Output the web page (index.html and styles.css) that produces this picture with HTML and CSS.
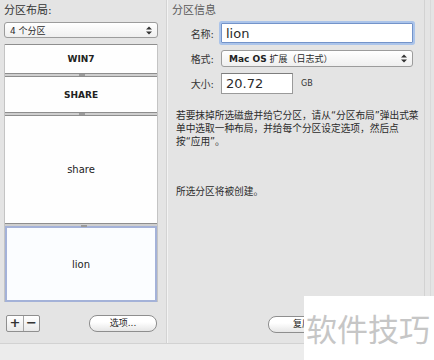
FILE: index.html
```html
<!DOCTYPE html>
<html lang="zh-CN">
  <head>
    <meta charset="UTF-8" />
    <meta name="viewport" content="width=device-width, initial-scale=1.0" />
    <title>分区</title>
    <link rel="stylesheet" href="styles.css">
  </head>
  <body>
    <div class="window">
      <div class="layout-pane">
        <div class="pane-title">分区布局:</div>
        <div class="popup layout-popup">
          <span>4 个分区</span>
          <svg class="arrows" width="6" height="9" viewBox="0 0 6 9"><path d="M0 3.5 L3 0.5 L6 3.5 Z M0 5.5 L3 8.5 L6 5.5 Z" fill="#333"/></svg>
        </div>
        <div class="map">
          <div class="part part-win7 caps">WIN7</div>
          <div class="part part-share caps">SHARE</div>
          <div class="part part-data">share</div>
          <div class="part part-lion selected">lion</div>
        </div>
        <div class="button-row">
          <div class="segmented">
            <span class="seg">+</span>
            <span class="seg">−</span>
          </div>
          <span class="push">选项...</span>
        </div>
      </div>

      <div class="info-pane">
        <div class="pane-title dim">分区信息</div>
        <div class="form-row row-name">
          <span class="field-label">名称:</span>
          <div class="text-field focused">lion</div>
        </div>
        <div class="form-row row-format">
          <span class="field-label">格式:</span>
          <div class="popup format-popup">
            <span><span class="mac">Mac OS</span> 扩展（日志式）</span>
            <svg class="arrows" width="6" height="9" viewBox="0 0 6 9"><path d="M0 3.5 L3 0.5 L6 3.5 Z M0 5.5 L3 8.5 L6 5.5 Z" fill="#333"/></svg>
          </div>
        </div>
        <div class="form-row row-size">
          <span class="field-label">大小:</span>
          <div class="text-field size-field">20.72</div>
          <span class="unit">GB</span>
        </div>
        <p class="note">若要抹掉所选磁盘并给它分区，请从“分区布局”弹出式菜<br>单中选取一种布局，并给每个分区设定选项，然后点<br>按“应用”。</p>
        <p class="note status">所选分区将被创建。</p>
        <div class="info-buttons">
          <span class="push">复原</span>
        </div>
      </div>
      <div class="edge"></div>
    </div>
    <div class="footer-strip"></div>

    <div class="watermark">软件技巧</div>
  </body>
</html>
```

FILE: styles.css
```css
* {
  box-sizing: border-box;
  margin: 0;
}
body {
  background: #e4e4e4;
  font-family: "DejaVu Sans", "Noto Sans CJK SC", sans-serif;
  color: #2b2b2b;
  width: 434px;
  height: 360px;
  overflow: hidden;
  position: relative;
}
.window {
  display: flex;
  height: 343px;
}
.footer-strip {
  height: 17px;
  background: #ececec;
  border-top: 1px solid #d2d2d2;
}

/* left side */
.layout-pane {
  width: 167px;
  padding: 4px 0 0 4px;
  border-right: 1px solid #d3d3d3;
  box-shadow: 1px 0 0 #f3f3f3;
  display: flex;
  flex-direction: column;
}
.pane-title {
  font-size: 11px;
  line-height: 14px;
  height: 14px;
  color: #333;
}
.pane-title.dim {
  color: #5a5a5a;
}
.popup {
  display: flex;
  align-items: center;
  justify-content: space-between;
  height: 16px;
  border: 1px solid #9c9c9c;
  border-radius: 3px;
  background: linear-gradient(#ffffff, #efefef);
  font-size: 9px;
  padding: 0 5px 0 5px;
  white-space: nowrap;
}
.layout-popup {
  width: 154px;
  margin-top: 4px;
}
.arrows {
  flex: none;
}
.map {
  width: 154px;
  margin-top: 6px;
  border-left: 1px solid #c4c4c4;
  border-right: 1px solid #c4c4c4;
  background: #cfcfcf;
  display: flex;
  flex-direction: column;
  gap: 2px;
}
.part {
  position: relative;
  background: #fefefe;
  border-top: 1px solid #8e8e8e;
  border-bottom: 1px solid #8e8e8e;
  display: flex;
  align-items: center;
  justify-content: center;
  font-size: 10px;
  color: #222;
}
.part + .part::before {
  content: "";
  position: absolute;
  left: 74px;
  top: -3px;
  width: 6px;
  height: 2px;
  background: #9a9a9a;
}
.caps {
  font-weight: bold;
  font-size: 9px;
}
.part-win7 {
  height: 30px;
}
.part-share {
  height: 37px;
}
.part-data {
  height: 109px;
}
.part-lion {
  height: 76px;
}
.selected {
  border: 2px solid #a4b2d8;
  background: #fbfdff;
}
.button-row {
  display: flex;
  align-items: center;
  justify-content: space-between;
  margin-top: 13px;
  padding: 0 9px 0 2px;
}
.segmented {
  display: flex;
  border: 1px solid #8f8f8f;
  border-radius: 2px;
  background: linear-gradient(#ffffff, #e9e9e9);
}
.seg {
  width: 16px;
  height: 15px;
  line-height: 14px;
  text-align: center;
  font-size: 13px;
  font-weight: bold;
  color: #333;
}
.seg + .seg {
  border-left: 1px solid #a5a5a5;
}
.push {
  display: inline-block;
  width: 68px;
  height: 17px;
  line-height: 15px;
  text-align: center;
  font-size: 9px;
  border: 1px solid #8e8e8e;
  border-radius: 8px;
  background: linear-gradient(#ffffff 40%, #e6e6e6);
  color: #222;
}

/* right side */
.info-pane {
  width: 257px;
  padding: 4px 0 10px 5px;
  display: flex;
  flex-direction: column;
}
.form-row {
  display: flex;
  align-items: center;
}
.field-label {
  width: 42px;
  text-align: right;
  margin-right: 7px;
  font-size: 10px;
  color: #333;
}
.text-field {
  background: #fff;
  border: 1px solid #9a9a9a;
  border-top-color: #7d7d7d;
  font-size: 13px;
  padding-left: 4px;
  display: flex;
  align-items: center;
}
.row-name {
  margin-top: 5px;
}
.row-name .text-field {
  width: 192px;
  height: 20px;
}
.focused {
  border-color: #7393c9;
  box-shadow: 0 0 0 2px #abc4ea;
  border-radius: 1px;
}
.row-format {
  margin-top: 7px;
}
.format-popup {
  width: 192px;
  height: 17px;
  padding-left: 7px;
}
.mac {
  font-weight: bold;
  color: #222;
}
.row-size {
  margin-top: 6px;
}
.size-field {
  width: 72px;
  height: 21px;
}
.unit {
  font-size: 8px;
  margin-left: 8px;
  color: #333;
}
.note {
  font-size: 9.7px;
  line-height: 13px;
  padding-left: 4px;
  margin-top: 15px;
  white-space: nowrap;
  color: #2b2b2b;
}
.note.status {
  margin-top: 37px;
}
.info-buttons {
  margin-top: auto;
  padding-left: 96px;
}
.edge {
  flex: 1;
  border-left: 1px solid #d2d2d2;
  position: relative;
}
.edge::after {
  content: "";
  position: absolute;
  left: 5px;
  top: 0;
  bottom: 0;
  width: 1px;
  background: #d9d9d9;
}

.watermark {
  position: absolute;
  left: 304px;
  top: 296px;
  width: 130px;
  height: 64px;
  background: #ffffff;
  color: #c6c6c6;
  font-family: "Noto Sans CJK SC", sans-serif;
  font-size: 31px;
  line-height: 64px;
  padding-left: 2px;
  white-space: nowrap;
}
```
